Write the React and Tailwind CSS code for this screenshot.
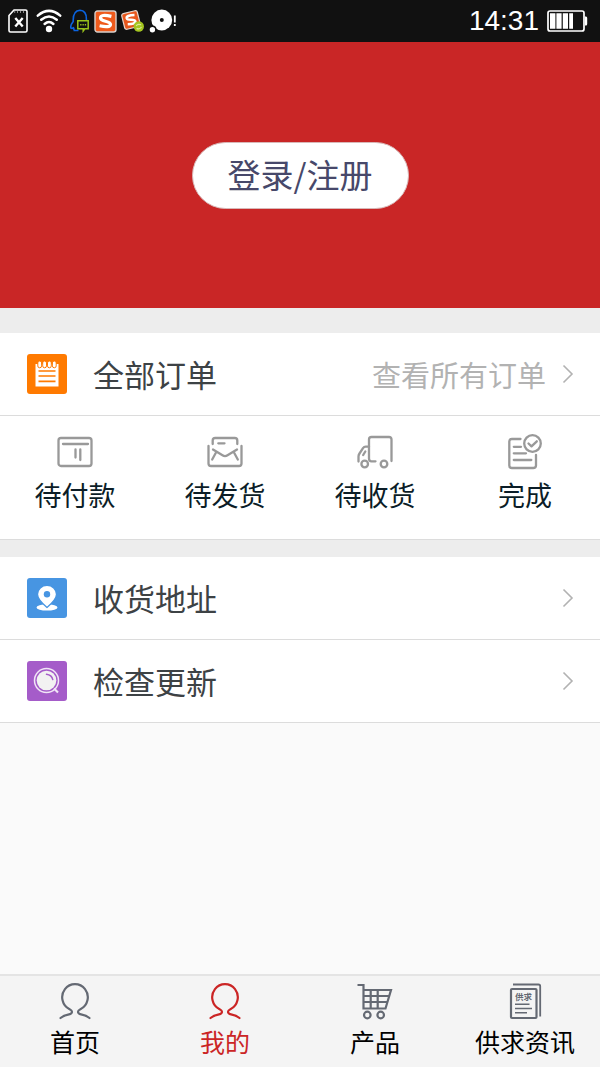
import React, { useState } from "react";

/* Status bar icons */
const SimIcon = () => (
  <svg width="20" height="24" viewBox="0 0 20 24" fill="none" stroke="#fff" strokeWidth="1.6">
    <path d="M1 6.5L6 1H17.5Q19 1 19 2.5V21.5Q19 23 17.5 23H2.5Q1 23 1 21.5Z" strokeLinejoin="round" />
    <path d="M6.7 2V4M9.5 2V4M12.5 2V4M15.5 2V4" strokeWidth="1" opacity="0.5" />
    <path d="M7.3 9L14.7 17.5M14.7 9L7.3 17.5" strokeWidth="2.4" />
  </svg>
);

const WifiIcon = () => (
  <svg width="26" height="24" viewBox="0 0 26 24" fill="none" stroke="#fff" strokeWidth="2.5" strokeLinecap="round">
    <path d="M1.8 6.6Q13 -2.8 24.2 6.6" />
    <path d="M5.2 10.8Q13 4.2 20.8 10.8" />
    <path d="M8.6 15Q13 11 17.4 15" />
    <circle cx="13" cy="20" r="3.2" fill="#fff" stroke="none" />
  </svg>
);

const QQIcon = () => (
  <svg width="20" height="24" viewBox="0 0 20 24" fill="none">
    <path
      d="M3.5 21.5Q4.5 20.5 3.4 18.6Q2 19.8 0.9 19Q0.2 16 3.2 12.4Q2.8 1.5 10 1.2Q16.6 1.5 16.4 10.5V12M3.5 21.5H8.5"
      stroke="#0a63e0"
      strokeWidth="1.6"
      strokeLinejoin="round"
    />
    <path d="M7.8 11.7H18.2V19.8H14.8L13.2 22V19.8H7.8Z" fill="#111" stroke="#9ac31c" strokeWidth="1.5" />
    <path d="M10.2 15.7H16.4" stroke="#9ac31c" strokeWidth="1.6" strokeDasharray="1.3 1" />
  </svg>
);

const SogouIcon = () => (
  <svg width="23" height="23" viewBox="0 0 23 23" fill="none">
    <rect x="1" y="1" width="21" height="21" rx="2.5" fill="#ef5a1c" stroke="#d8d0cc" strokeWidth="1.4" />
    <path d="M17.4 6.4Q6.5 3.8 6.5 8Q6.7 10 11.5 11.2Q16.7 12.5 16.5 14.6Q15.8 18 5.6 15.8" stroke="#fff" strokeWidth="3.2" />
  </svg>
);

const SogouUpdateIcon = () => (
  <svg width="24" height="24" viewBox="0 0 24 24" fill="none">
    <g transform="rotate(-14 10 11)">
      <rect x="2" y="3" width="16" height="16" rx="2" fill="#e8571c" stroke="#e5d6ce" strokeWidth="1.2" />
      <path d="M14.6 7Q6.3 5.2 6.3 8.4Q6.5 10 10.2 10.8Q14 11.8 13.9 13.5Q13.2 16 5.8 14.3" stroke="#fff" strokeWidth="2.6" />
    </g>
    <circle cx="17.8" cy="17.5" r="5.2" fill="#a4c520" />
    <path d="M15.1 16.8Q16.8 14.4 20.1 15.8M15.6 19.4Q18.6 20.8 20.5 18" stroke="#dbe99a" strokeWidth="1.2" />
  </svg>
);

const BubbleIcon = () => (
  <svg width="28" height="24" viewBox="0 0 28 24">
    <circle cx="12.8" cy="11" r="10.4" fill="#fff" />
    <circle cx="12.8" cy="11" r="2" fill="#111" />
    <circle cx="3.4" cy="20.7" r="3.4" fill="#fff" stroke="#111" strokeWidth="1.4" />
    <path d="M25.8 6.5V13.5M25.8 15V17" stroke="#fff" strokeWidth="1.8" />
  </svg>
);

const BatteryIcon = () => (
  <svg width="41" height="22" viewBox="0 0 41 22" fill="none">
    <rect x="1" y="1" width="36" height="20" rx="2" stroke="#fff" strokeWidth="1.7" />
    <path d="M38 6.5H39Q40.2 6.5 40.2 8V14Q40.2 15.5 39 15.5H38Z" fill="#fff" />
    <path d="M3 3.2H8.4V18.8H3ZM9.4 3.2H14.6V18.8H9.4ZM15.8 3.2H21V18.8H15.8ZM22.2 3.2H26V18.8H22.2Z" fill="#fff" />
  </svg>
);

/* Row icons */
const OrderIcon = () => (
  <svg width="24" height="26" viewBox="0 0 24 26" fill="none">
    <path d="M0.5 3H23.5V25.5H0.5Z" fill="#fff" />
    <g fill="#fff" stroke="#ff7a00" strokeWidth="1">
      <rect x="2.8" y="0" width="3.8" height="6.8" rx="1.9" />
      <rect x="7.7" y="0" width="3.8" height="6.8" rx="1.9" />
      <rect x="12.5" y="0" width="3.8" height="6.8" rx="1.9" />
      <rect x="17.4" y="0" width="3.8" height="6.8" rx="1.9" />
    </g>
    <path d="M3.5 10H20.5M3.5 15H20.5M3.5 20.3H20.5" stroke="#ff7a00" strokeWidth="1.7" />
  </svg>
);

const AddressIcon = () => (
  <svg width="22" height="26" viewBox="0 0 22 26" fill="#fff">
    <ellipse cx="11" cy="22.4" rx="10.5" ry="3.2" />
    <path
      d="M11 22.5Q1.5 14.5 1.5 9.3A9.5 9 0 0 1 20.5 9.3Q20.5 14.5 11 22.5Z"
      stroke="#4795e2"
      strokeWidth="1.3"
    />
    <circle cx="11" cy="9.2" r="3.2" fill="#4795e2" />
  </svg>
);

const UpdateIcon = () => (
  <svg width="28" height="28" viewBox="0 0 28 28" fill="none">
    <circle cx="13.5" cy="13.5" r="12" stroke="#f1e6f6" strokeWidth="1.5" />
    <circle cx="13.5" cy="13.5" r="9.8" fill="#f2f2f2" />
    <path d="M13.5 7.3Q18.7 8 19.8 12.6" stroke="#a55cc9" strokeWidth="1.5" strokeLinecap="round" />
    <path d="M21 21.5L25 25.5" stroke="#f1e6f6" strokeWidth="2.2" />
  </svg>
);

/* Order state icons */
const PayIcon = () => (
  <svg width="36" height="36" viewBox="0 0 36 36" fill="none" stroke="#999" strokeWidth="2.3" strokeLinecap="round">
    <rect x="1.5" y="4" width="33" height="28" rx="2.5" />
    <path d="M6 10H31M18.5 15.5V23.5M23.3 15.5V26" />
  </svg>
);

const SendIcon = () => (
  <svg width="36" height="36" viewBox="0 0 36 36" fill="none" stroke="#999" strokeWidth="2.3" strokeLinecap="round" strokeLinejoin="round">
    <path d="M5.7 10V6.5Q5.7 4 8.2 4H27.8Q30.3 4 30.3 6.5V10" />
    <path d="M11.3 9.3H17.5" />
    <path d="M1.5 12V29.5Q1.5 32 4 32H32Q34.5 32 34.5 29.5V12" />
    <path d="M6 15.5L15.5 21.3Q18 23 20.5 21.3L30 15.5M9 18.5L5.2 25.5M27 18.5L30.8 25.5" />
  </svg>
);

const TruckIcon = () => (
  <svg width="36" height="36" viewBox="0 0 36 36" fill="none" stroke="#999" strokeWidth="2.3" strokeLinecap="round" strokeLinejoin="round">
    <path d="M34.5 27V5.5Q34.5 3 32 3H14.5Q12 3 12 5.5V24.5Q12 27.3 14.5 27.3H18.5" />
    <path d="M12 12.7H8.7Q7 12.7 6 14.2L2.5 19.5Q1.5 21 1.5 22.5V27.5" />
    <path d="M8.3 17.5L6.2 21" />
    <circle cx="7.7" cy="30" r="3.3" />
    <circle cx="27" cy="30" r="3.3" />
  </svg>
);

const DoneIcon = () => (
  <svg width="36" height="36" viewBox="0 0 36 36" fill="none" stroke="#999" strokeWidth="2.3" strokeLinecap="round" strokeLinejoin="round">
    <path d="M13.5 5H5Q2.3 5 2.3 7.5V31.5Q2.3 34 5 34H26.2Q29 34 29 31.5V21" />
    <path d="M6.8 12.8H14M6.8 19.3H19M6.8 26H24.3" />
    <circle cx="25.5" cy="9.5" r="8.3" />
    <path d="M21.5 9.5L24.5 12.3L29.8 7.3" />
  </svg>
);

/* Tab icons */
const PersonIcon = () => (
  <svg width="36" height="38" viewBox="0 0 36 38" fill="none" stroke="currentColor" strokeWidth="2.2" strokeLinecap="round">
    <path d="M3.5 36Q6.5 33.6 12 32.4Q15 31.8 15 29.8Q15 28.4 12.6 27.2A12.8 13.2 0 1 1 23.4 27.2Q21 28.4 21 29.8Q21 31.8 24 32.4Q29.5 33.6 32.5 36" />
  </svg>
);

const CartIcon = () => (
  <svg width="36" height="38" viewBox="0 0 36 38" fill="none" stroke="currentColor" strokeWidth="2.2">
    <path d="M0.5 3H6.5V26.5H28.5L34 8H6.5" />
    <path d="M6.5 14H32M6.5 20H30.3M13.7 8V26.5M20.7 8V26.5" />
    <circle cx="10.3" cy="33" r="3.3" />
    <circle cx="23.7" cy="33" r="3.3" />
  </svg>
);

const NewsIcon = () => (
  <svg width="36" height="38" viewBox="0 0 36 38" fill="none" stroke="currentColor" strokeWidth="2.2">
    <rect x="4" y="7" width="25.5" height="29" rx="1" />
    <path d="M6 2.5H31.5Q33.2 2.5 33.2 4.2V34.5" strokeWidth="1.8" />
    <text x="8" y="18" fontSize="8.5" fontWeight="bold" fill="currentColor" stroke="none">供求</text>
    <path d="M8 22.3H22.5M8 26.5H25M8 30.7H20" strokeWidth="1.5" />
  </svg>
);

const ChevronIcon = () => (
  <svg width="12" height="20" viewBox="0 0 12 20" fill="none" stroke="#b2b2b2" strokeWidth="1.6">
    <path d="M1.5 1.5L10 10L1.5 18.5" />
  </svg>
);

const orderStates = [
  { label: "待付款", Icon: PayIcon },
  { label: "待发货", Icon: SendIcon },
  { label: "待收货", Icon: TruckIcon },
  { label: "完成", Icon: DoneIcon },
];

const tabs = [
  { id: "home", label: "首页", Icon: PersonIcon },
  { id: "mine", label: "我的", Icon: PersonIcon },
  { id: "product", label: "产品", Icon: CartIcon },
  { id: "news", label: "供求资讯", Icon: NewsIcon },
];

function MenuRow({ href, color, Icon, title, hint }) {
  return (
    <a href={href} className="flex h-[83px] items-center border-b border-[#dcdcdc] bg-white pr-[26px] pl-[27px]">
      <span className={`flex h-10 w-10 items-center justify-center rounded-[3px] ${color}`}>
        <Icon />
      </span>
      <span className="ml-[26px] text-[31px] leading-10 text-[#3d4245]">{title}</span>
      <span className="mr-4 ml-auto text-[29px] leading-10 text-[#b2b2b2]">{hint}</span>
      <ChevronIcon />
    </a>
  );
}

export default function App() {
  const [activeTab, setActiveTab] = useState("mine");

  return (
    <div className="flex min-h-screen flex-col bg-[#fafafa] font-['Noto_Sans_CJK_SC',sans-serif]">
      {/* Status bar */}
      <div className="flex h-[42px] items-center justify-between bg-[#111] pr-3 pl-2">
        <div className="flex items-center gap-2">
          <SimIcon />
          <WifiIcon />
          <div className="flex items-center gap-1">
            <QQIcon />
            <SogouIcon />
            <SogouUpdateIcon />
            <BubbleIcon />
          </div>
        </div>
        <div className="flex items-center gap-2">
          <span className="font-['Liberation_Sans',sans-serif] text-[28px] leading-10 text-white">14:31</span>
          <BatteryIcon />
        </div>
      </div>

      {/* Login header */}
      <header className="flex h-[266px] items-center justify-center bg-[#c92626]">
        <button
          type="button"
          className="h-[67px] w-[217px] rounded-full border border-[#d8b8b8] bg-white text-[33px] text-[#47486a]"
        >
          登录/注册
        </button>
      </header>

      <main className="flex-1">
        {/* Orders */}
        <section className="border-t-[25px] border-[#ededed]">
          <MenuRow href="#orders" color="bg-[#ff7a00]" Icon={OrderIcon} title="全部订单" hint="查看所有订单" />
          <div className="grid h-[124px] grid-cols-4 border-b border-[#dcdcdc] bg-white pt-[18px]">
            {orderStates.map(({ label, Icon }) => (
              <a key={label} href="#orders" className="flex flex-col items-center text-[27px] leading-10 text-[#0b1d27]">
                <Icon />
                <span className="mt-[5px]">{label}</span>
              </a>
            ))}
          </div>
        </section>

        {/* Settings */}
        <section className="border-t-[17px] border-[#ededed]">
          <MenuRow href="#address" color="bg-[#4795e2]" Icon={AddressIcon} title="收货地址" />
          <MenuRow href="#update" color="bg-[#a55cc9]" Icon={UpdateIcon} title="检查更新" />
        </section>
      </main>

      {/* Bottom tabs */}
      <nav className="grid h-[93px] grid-cols-4 border-t-2 border-[#e4e4e4] bg-[#f4f4f4] pt-1.5">
        {tabs.map(({ id, label, Icon }) => {
          const active = id === activeTab;
          return (
            <a
              key={id}
              href={`#${id}`}
              onClick={() => setActiveTab(id)}
              className={`flex flex-col items-center ${active ? "text-[#cb2525]" : "text-[#646973]"}`}
            >
              <Icon />
              <span className={`mt-[3px] text-[25px] leading-9 ${active ? "" : "text-black"}`}>{label}</span>
            </a>
          );
        })}
      </nav>
    </div>
  );
}
